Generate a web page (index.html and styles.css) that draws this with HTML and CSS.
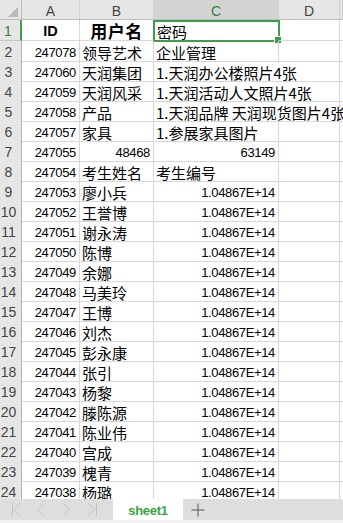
FILE: index.html
```html
<!DOCTYPE html>
<html lang="zh-CN">
<head>
<meta charset="utf-8">
<title>sheet1</title>
<link rel="stylesheet" href="styles.css">
</head>
<body>
<div class="app">
  <div class="sheet">
    <div class="row hdr">
      <div class="corner"></div>
      <div class="ch">A</div>
      <div class="ch">B</div>
      <div class="ch ch-sel">C</div>
      <div class="ch">D</div>
      <div class="ch"></div>
    </div>
    <div class="row r-first">
      <div class="rh rh-sel">1</div>
      <div class="c ctr bold">ID</div>
      <div class="c ctr big">用户名</div>
      <div class="c cur">密码<span class="selbox"></span></div>
      <div class="c"></div>
      <div class="c"></div>
    </div>
    <div class="row">
      <div class="rh">2</div>
      <div class="c num">247078</div>
      <div class="c txt">领导艺术</div>
      <div class="c txt">企业管理</div>
      <div class="c"></div>
      <div class="c"></div>
    </div>
    <div class="row">
      <div class="rh">3</div>
      <div class="c num">247060</div>
      <div class="c txt">天润集团</div>
      <div class="c txt span2">1.天润办公楼照片4张</div>
      <div class="c"></div>
    </div>
    <div class="row">
      <div class="rh">4</div>
      <div class="c num">247059</div>
      <div class="c txt">天润风采</div>
      <div class="c txt span2">1.天润活动人文照片4张</div>
      <div class="c"></div>
    </div>
    <div class="row">
      <div class="rh">5</div>
      <div class="c num">247058</div>
      <div class="c txt">产品</div>
      <div class="c txt span2">1.天润品牌 天润现货图片4张</div>
      <div class="c"></div>
    </div>
    <div class="row">
      <div class="rh">6</div>
      <div class="c num">247057</div>
      <div class="c txt">家具</div>
      <div class="c txt">1.参展家具图片</div>
      <div class="c"></div>
      <div class="c"></div>
    </div>
    <div class="row">
      <div class="rh">7</div>
      <div class="c num">247055</div>
      <div class="c num">48468</div>
      <div class="c num">63149</div>
      <div class="c"></div>
      <div class="c"></div>
    </div>
    <div class="row">
      <div class="rh">8</div>
      <div class="c num">247054</div>
      <div class="c txt">考生姓名</div>
      <div class="c txt">考生编号</div>
      <div class="c"></div>
      <div class="c"></div>
    </div>
    <div class="row"><div class="rh">9</div><div class="c num">247053</div><div class="c txt">廖小兵</div><div class="c num">1.04867E+14</div><div class="c"></div><div class="c"></div></div>
    <div class="row"><div class="rh">10</div><div class="c num">247052</div><div class="c txt">王誉博</div><div class="c num">1.04867E+14</div><div class="c"></div><div class="c"></div></div>
    <div class="row"><div class="rh">11</div><div class="c num">247051</div><div class="c txt">谢永涛</div><div class="c num">1.04867E+14</div><div class="c"></div><div class="c"></div></div>
    <div class="row"><div class="rh">12</div><div class="c num">247050</div><div class="c txt">陈博</div><div class="c num">1.04867E+14</div><div class="c"></div><div class="c"></div></div>
    <div class="row"><div class="rh">13</div><div class="c num">247049</div><div class="c txt">余娜</div><div class="c num">1.04867E+14</div><div class="c"></div><div class="c"></div></div>
    <div class="row"><div class="rh">14</div><div class="c num">247048</div><div class="c txt">马美玲</div><div class="c num">1.04867E+14</div><div class="c"></div><div class="c"></div></div>
    <div class="row"><div class="rh">15</div><div class="c num">247047</div><div class="c txt">王博</div><div class="c num">1.04867E+14</div><div class="c"></div><div class="c"></div></div>
    <div class="row"><div class="rh">16</div><div class="c num">247046</div><div class="c txt">刘杰</div><div class="c num">1.04867E+14</div><div class="c"></div><div class="c"></div></div>
    <div class="row"><div class="rh">17</div><div class="c num">247045</div><div class="c txt">彭永康</div><div class="c num">1.04867E+14</div><div class="c"></div><div class="c"></div></div>
    <div class="row"><div class="rh">18</div><div class="c num">247044</div><div class="c txt">张引</div><div class="c num">1.04867E+14</div><div class="c"></div><div class="c"></div></div>
    <div class="row"><div class="rh">19</div><div class="c num">247043</div><div class="c txt">杨黎</div><div class="c num">1.04867E+14</div><div class="c"></div><div class="c"></div></div>
    <div class="row"><div class="rh">20</div><div class="c num">247042</div><div class="c txt">滕陈源</div><div class="c num">1.04867E+14</div><div class="c"></div><div class="c"></div></div>
    <div class="row"><div class="rh">21</div><div class="c num">247041</div><div class="c txt">陈业伟</div><div class="c num">1.04867E+14</div><div class="c"></div><div class="c"></div></div>
    <div class="row"><div class="rh">22</div><div class="c num">247040</div><div class="c txt">宫成</div><div class="c num">1.04867E+14</div><div class="c"></div><div class="c"></div></div>
    <div class="row"><div class="rh">23</div><div class="c num">247039</div><div class="c txt">槐青</div><div class="c num">1.04867E+14</div><div class="c"></div><div class="c"></div></div>
    <div class="row"><div class="rh">24</div><div class="c num">247038</div><div class="c txt">杨璐</div><div class="c num">1.04867E+14</div><div class="c"></div><div class="c"></div></div>
  </div>
  <div class="tabbar">
    <div class="nav">
      <svg width="110" height="21" viewBox="0 0 110 21" aria-hidden="true">
        <g fill="none" stroke="#c4c4c4" stroke-width="1">
          <path d="M12.5 4v13"/>
          <path d="M20 4l-6.5 6.5L20 17"/>
          <path d="M44 4l-6.5 6.5L44 17"/>
          <path d="M63 4l6.5 6.5L63 17"/>
          <path d="M88 4l6.5 6.5L88 17"/>
          <path d="M96.5 4v13"/>
        </g>
      </svg>
    </div>
    <div class="tab">sheet1</div>
    <div class="add">
      <svg width="14" height="14" viewBox="0 0 14 14" aria-hidden="true">
        <path d="M7 0.5v13M0.5 7h13" fill="none" stroke="#555" stroke-width="1"/>
      </svg>
    </div>
  </div>
  <div class="hscroll"></div>
</div>
</body>
</html>
```

FILE: styles.css
```css
* { box-sizing: border-box; }
html, body { margin: 0; padding: 0; background: #fff; }
.app { width: 343px; height: 523px; overflow: hidden; display: flex; flex-direction: column; }

.sheet { height: 499px; overflow: hidden; flex: none; }

.row {
  display: grid;
  grid-template-columns: 22px 58px 74px 125px 61px 1fr;
  height: 20px;
}
.r-first { height: 21px; }

.c {
  border-right: 1px solid #d8d8d8;
  border-bottom: 1px solid #d8d8d8;
  display: flex;
  align-items: center;
  padding: 2px 2px 0 2px;
  white-space: nowrap;
  overflow: visible;
  color: #000;
  font-family: "Noto Sans CJK SC", sans-serif;
  font-size: 15px;
  line-height: 17px;
  position: relative;
}
.txt { justify-content: flex-start; }
.span2 { grid-column: span 2; }
.num {
  justify-content: flex-end;
  padding-right: 3px;
  font-family: "Liberation Sans", "Noto Sans CJK SC", sans-serif;
  font-size: 13px;
  letter-spacing: -0.35px;
  padding-top: 3px;
}
.ctr { justify-content: center; }
.bold { font-weight: bold; font-family: "Liberation Sans", "Noto Sans CJK SC", sans-serif; font-size: 14.5px; padding-top: 3px; }
.big {
  font-weight: bold;
  font-size: 17px;
  line-height: 17px;
  letter-spacing: 0.5px;
  font-family: "Noto Sans CJK SC", sans-serif;
  padding-top: 1px;
}
.cur { padding-left: 3px; }

.selbox {
  position: absolute;
  left: -1px; top: 0; right: -2px; bottom: -2px;
  border: 2px solid #3e9f48;
  pointer-events: none;
}
.selbox::after {
  content: "";
  position: absolute;
  right: -4px; bottom: -4px;
  width: 6px; height: 6px;
  background: #3e9f48;
  border: 1px solid #fff;
}

.hdr .ch, .corner {
  background: #e6e6e6;
  border-right: 1px solid #d0d0d0;
  border-bottom: 1px solid #bcbcbc;
  font-family: "Liberation Sans", sans-serif;
  font-size: 14px;
  color: #444;
  display: flex;
  align-items: center;
  justify-content: center;
  padding-top: 2px;
}
.hdr .ch-sel { background: #d3d3d3; color: #3a7f3e; }
.corner { position: relative; border-right: 1px solid #bcbcbc; }
.corner::after {
  content: "";
  position: absolute;
  right: 3px; bottom: 2px;
  width: 10px; height: 10px;
  background: #b8b8b8;
  clip-path: polygon(100% 0, 100% 100%, 0 100%);
}

.rh {
  background: #e6e6e6;
  border-right: 1px solid #b4b4b4;
  border-bottom: 1px solid #c8c8c8;
  font-family: "Liberation Sans", sans-serif;
  font-size: 14px;
  color: #444;
  display: flex;
  align-items: center;
  justify-content: center;
  padding-right: 4px;
  padding-top: 2px;
}
.rh-sel { color: #3a7f3e; border-right: 2px solid #3e9f48; }

.tabbar {
  height: 21px;
  flex: none;
  background: #dedede;
  display: flex;
  align-items: stretch;
}
.nav { width: 113px; flex: none; display: flex; }
.tab {
  width: 70px;
  background: #fff;
  color: #3aa43d;
  font-family: "Liberation Sans", sans-serif;
  font-weight: bold;
  font-size: 13px;
  letter-spacing: -0.3px;
  display: flex;
  align-items: center;
  justify-content: center;
  padding-top: 1px;
}
.add { width: 30px; display: flex; align-items: center; justify-content: center; padding-top: 1px; }
.hscroll { flex: 1; background: #f1f1f1; }
```
